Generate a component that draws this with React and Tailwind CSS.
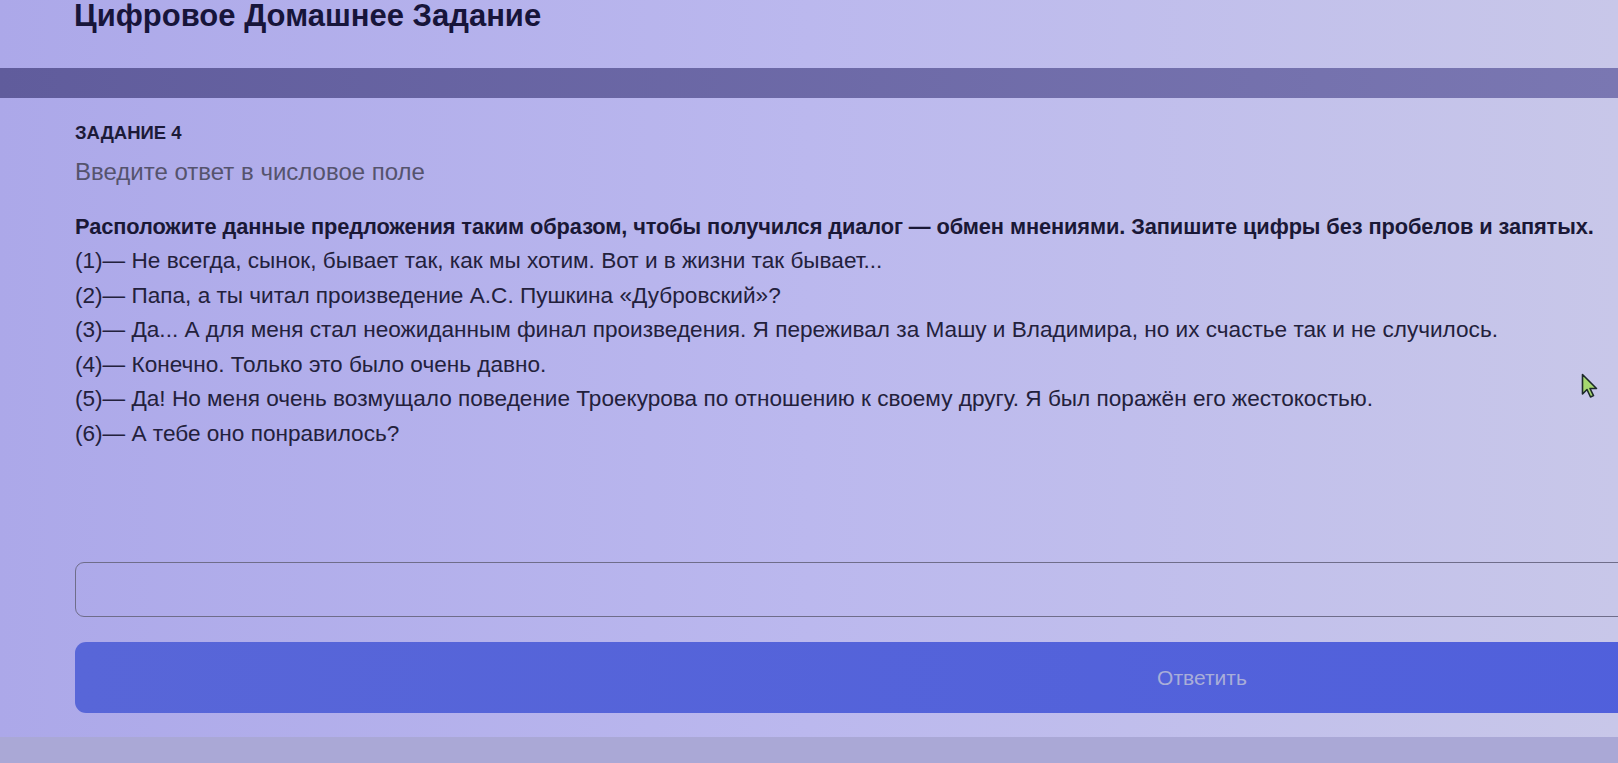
import React from 'react';

const lines = [
    '(1)— Не всегда, сынок, бывает так, как мы хотим. Вот и в жизни так бывает...',
    '(2)— Папа, а ты читал произведение А.С. Пушкина «Дубровский»?',
    '(3)— Да... А для меня стал неожиданным финал произведения. Я переживал за Машу и Владимира, но их счастье так и не случилось.',
    '(4)— Конечно. Только это было очень давно.',
    '(5)— Да! Но меня очень возмущало поведение Троекурова по отношению к своему другу. Я был поражён его жестокостью.',
    '(6)— А тебе оно понравилось?',
];

const Cursor = () => (
    <svg className="absolute left-[1581px] top-[373px]" width="18" height="26" viewBox="0 0 18 26">
        <path d="M1.5 1.5 L1.5 21 L6 16.5 L9.5 24 L12.5 22.6 L9 15.5 L15.5 15.5 Z" fill="#a6d86f" stroke="#1d2a2a" strokeWidth="1.6" strokeLinejoin="round" />
    </svg>
);

const App = () => {
    return (
        <div className="relative w-[1618px] h-[763px] overflow-hidden bg-linear-to-r from-[#aca8e9] via-[#bbb8ee] to-[#c8c7e9] font-['Liberation_Sans',Arial,sans-serif] text-[#23213c]">
            <header className="flex h-[68px] items-start pl-[74px]">
                <h1 className="text-[31px] font-bold leading-[32px] text-[#17153a]">Цифровое Домашнее Задание</h1>
            </header>

            <div className="h-[30px] bg-linear-to-r from-[#605c9c] to-[#7a77b2]" />

            <main className="pl-[75px] pt-[26px]">
                <div className="text-[18.5px] font-bold uppercase leading-none text-[#1c1a38]">Задание 4</div>
                <p className="mt-[17px] text-[24px] leading-none text-[#55536d]">Введите ответ в числовое поле</p>

                <div className="mt-[26px] leading-[34.5px]">
                    <p className="whitespace-nowrap text-[21.8px] font-bold tracking-[-0.1px] text-[#1a1836]">
                        Расположите данные предложения таким образом, чтобы получился диалог — обмен мнениями. Запишите цифры без пробелов и запятых.
                    </p>
                    {lines.map((line) => (
                        <p key={line} className="whitespace-nowrap text-[22.6px]">{line}</p>
                    ))}
                </div>

                <div className="mt-[111px] w-[2254px] flex flex-col gap-[25px]">
                    <input
                        type="text"
                        className="h-[55px] w-full rounded-[9px] border border-[#6f6d8a] bg-transparent px-4 outline-none"
                    />
                    <button className="h-[71px] w-full rounded-[11px] bg-linear-to-r from-[#5866d8] to-[#4d5ddd] text-[21px] text-[#a9aed8]">
                        Ответить
                    </button>
                </div>
            </main>

            <div className="absolute bottom-0 left-0 right-0 h-[26px] bg-[#aaa8d6]" />
            <Cursor />
        </div>
    );
};

export default App;
